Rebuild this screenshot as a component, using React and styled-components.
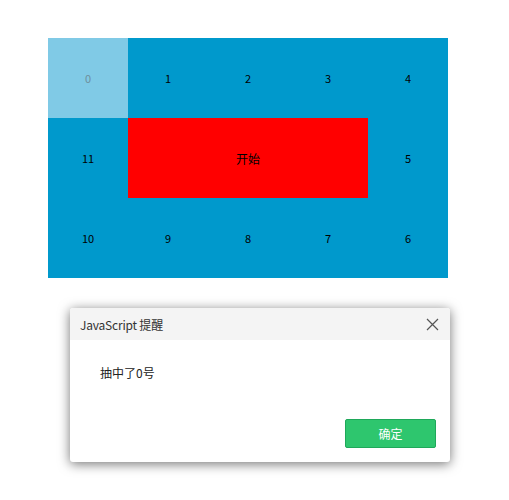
import React from "react";
import styled, { createGlobalStyle } from "styled-components";

const Global = createGlobalStyle`
  html, body { margin: 0; padding: 0; background: #fff; }
  body { font-family: "Noto Sans CJK SC", "Noto Sans", sans-serif; }
`;

const Page = styled.div`
  display: flex;
  flex-direction: column;
  padding: 38px 0 38px 48px;
`;

const Board = styled.div`
  display: grid;
  grid-template-columns: repeat(5, 80px);
  grid-template-rows: repeat(3, 80px);
  width: 400px;
  background: #0099cc;
`;

const Cell = styled.div`
  display: flex;
  align-items: center;
  justify-content: center;
  font-size: 11px;
  color: ${(p) => (p.$active ? "#6f8f9c" : "#000")};
  background: ${(p) => (p.$active ? "#80cae6" : "transparent")};
`;

const StartCell = styled.div`
  grid-column: 2 / 5;
  grid-row: 2;
  display: flex;
  align-items: center;
  justify-content: center;
  background: #ff0000;
  font-size: 12px;
  color: #000;
`;

const Dialog = styled.div`
  margin: 30px 0 0 22px;
  width: 380px;
  background: #fff;
  border-radius: 3px;
  box-shadow: 0 2px 12px rgba(0, 0, 0, 0.55);
  display: flex;
  flex-direction: column;
  overflow: hidden;
`;

const Header = styled.div`
  height: 32px;
  background: #f4f4f4;
  display: flex;
  align-items: center;
  justify-content: space-between;
  padding: 0 10px;
  font-size: 12px;
  letter-spacing: -0.2px;
  color: #333;
`;

const Close = styled.button`
  border: 0;
  background: none;
  padding: 0;
  width: 16px;
  height: 16px;
  display: flex;
  align-items: center;
  justify-content: center;
  cursor: pointer;
`;

const Body = styled.div`
  padding: 25px 30px 0 30px;
  font-size: 12px;
  line-height: 16px;
  color: #222;
  height: 54px;
`;

const Footer = styled.div`
  display: flex;
  justify-content: flex-end;
  padding: 0 14px 14px 0;
`;

const OkButton = styled.button`
  width: 91px;
  height: 29px;
  border: 1px solid #1fa85a;
  border-radius: 2px;
  background: #2ec66e;
  color: #fff;
  font-family: "Noto Sans CJK SC", sans-serif;
  font-size: 12px;
  cursor: pointer;
`;

const layout = [
  [0, 1, 2, 3, 4],
  [11, null, 5],
  [10, 9, 8, 7, 6],
];

export default function App() {
  const active = 0;
  return (
    <>
      <Global />
      <Page>
        <Board>
          {layout.flat().map((n, i) =>
            n === null ? (
              <StartCell key="start">开始</StartCell>
            ) : (
              <Cell key={i} $active={n === active}>
                {n}
              </Cell>
            )
          )}
        </Board>
        <Dialog>
          <Header>
            <span>JavaScript 提醒</span>
            <Close aria-label="close">
              <svg width="13" height="13" viewBox="0 0 13 13">
                <path d="M1 1L12 12M12 1L1 12" stroke="#555" strokeWidth="1.2" fill="none" />
              </svg>
            </Close>
          </Header>
          <Body>抽中了0号</Body>
          <Footer>
            <OkButton>确定</OkButton>
          </Footer>
        </Dialog>
      </Page>
    </>
  );
}
